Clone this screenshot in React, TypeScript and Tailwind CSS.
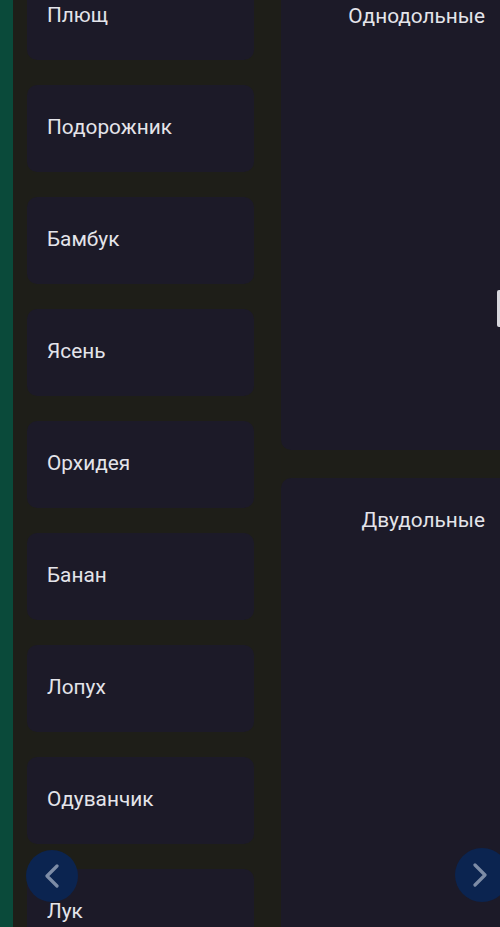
import React from "react";

const items = ["Плющ", "Подорожник", "Бамбук", "Ясень", "Орхидея", "Банан", "Лопух", "Одуванчик", "Лук"];

function Chevron({ dir }: { dir: "left" | "right" }) {
  return (
    <svg width="16" height="24" viewBox="0 0 16 24" fill="none">
      {dir === "left" ? (
        <path d="M13 2 L3 12 L13 22" stroke="#7d8ca6" strokeWidth="3.2" strokeLinecap="round" strokeLinejoin="round" />
      ) : (
        <path d="M3 2 L13 12 L3 22" stroke="#7d8ca6" strokeWidth="3.2" strokeLinecap="round" strokeLinejoin="round" />
      )}
    </svg>
  );
}

export default function App() {
  return (
    <div
      className="relative w-[500px] h-[927px] overflow-hidden bg-[#1e1e18] flex"
      style={{ fontFamily: "Roboto, 'Noto Sans', sans-serif" }}
    >
      <div className="w-[13px] shrink-0 bg-[#0a4a3a]" />
      <div className="flex -mt-[27px] pl-[14px] gap-[27px]">
        <div className="w-[227px] shrink-0 flex flex-col gap-[25px]">
          {items.map((t) => (
            <div
              key={t}
              className="h-[87px] shrink-0 rounded-[10px] bg-[#1c1a28] flex items-center pl-[20px] text-[20.8px] text-[#e4e4ea]"
            >
              <span className="-mt-[2px]">{t}</span>
            </div>
          ))}
        </div>
        <div className="w-[219px] shrink-0 flex flex-col gap-[28px]">
          <div className="h-[477px] shrink-0 rounded-l-[10px] bg-[#1c1a28] flex justify-end pr-[15px] pt-[30px] text-[20.8px] text-[#e4e4ea] leading-[26px]">
            Однодольные
          </div>
          <div className="h-[500px] shrink-0 rounded-l-[10px] bg-[#1c1a28] flex justify-end pr-[15px] pt-[29px] text-[20.8px] text-[#e4e4ea] leading-[26px]">
            Двудольные
          </div>
        </div>
      </div>
      <div className="absolute left-[497px] top-[290px] w-[3px] h-[37px] bg-[#d8d8de] rounded-l-[2px]" />
      <div className="absolute left-[26px] top-[850px] w-[52px] h-[52px] rounded-full bg-[#0b2450] flex items-center justify-center">
        <Chevron dir="left" />
      </div>
      <div className="absolute left-[455px] top-[848px] w-[54px] h-[54px] rounded-full bg-[#0b2450] flex items-center justify-center pr-[4px]">
        <Chevron dir="right" />
      </div>
    </div>
  );
}
